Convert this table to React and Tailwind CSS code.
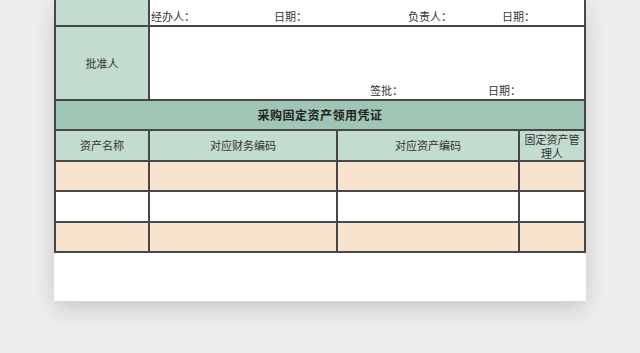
export default function App() {
  const font = { fontFamily: '"Noto Sans CJK SC", "Noto Sans", sans-serif' };
  const green = "bg-[#c2dccf]";
  const peach = "bg-[#f8e3cf]";
  const rows = [peach, "bg-white", peach];
  return (
    <div className="w-[640px] h-[353px] bg-[#eeeeee] pl-[54px] overflow-hidden" style={font}>
      <div className="w-[532px] h-[301px] bg-white shadow-[0_8px_22px_rgba(0,0,0,0.16)]">
        <div className="grid grid-cols-[92px_186px_180px_64px] grid-rows-[25px_72px_28px_29px_28px_29px_28px] gap-[2px] bg-[#474747] px-[2px] pb-[2px] text-[#333] text-[11px] leading-none">
          <div className={green}></div>
          <div className="col-span-3 bg-white flex items-end pb-[3px] pl-[1px]">
            <span className="w-[123px]">经办人：</span>
            <span className="w-[134px]">日期：</span>
            <span className="w-[94px]">负责人：</span>
            <span>日期：</span>
          </div>
          <div className={`${green} flex items-center justify-center`}>批准人</div>
          <div className="col-span-3 bg-white flex items-end pb-[3px] pl-[220px]">
            <span className="w-[118px]">签批：</span>
            <span>日期：</span>
          </div>
          <div className="col-span-4 bg-[#9fc6b4] flex items-center justify-center text-[12px] font-bold tracking-[0.5px] text-[#222]">
            采购固定资产领用凭证
          </div>
          <div className={`${green} flex items-center justify-center`}>资产名称</div>
          <div className={`${green} flex items-center justify-center`}>对应财务编码</div>
          <div className={`${green} flex items-center justify-center`}>对应资产编码</div>
          <div className={`${green} flex flex-col items-center justify-center text-center leading-[14px]`}>
            <span>固定资产管</span>
            <span>理人</span>
          </div>
          {rows.map((c, i) => (
            <>
              <div key={`a${i}`} className={c}></div>
              <div key={`b${i}`} className={c}></div>
              <div key={`c${i}`} className={c}></div>
              <div key={`d${i}`} className={c}></div>
            </>
          ))}
        </div>
      </div>
    </div>
  );
}
